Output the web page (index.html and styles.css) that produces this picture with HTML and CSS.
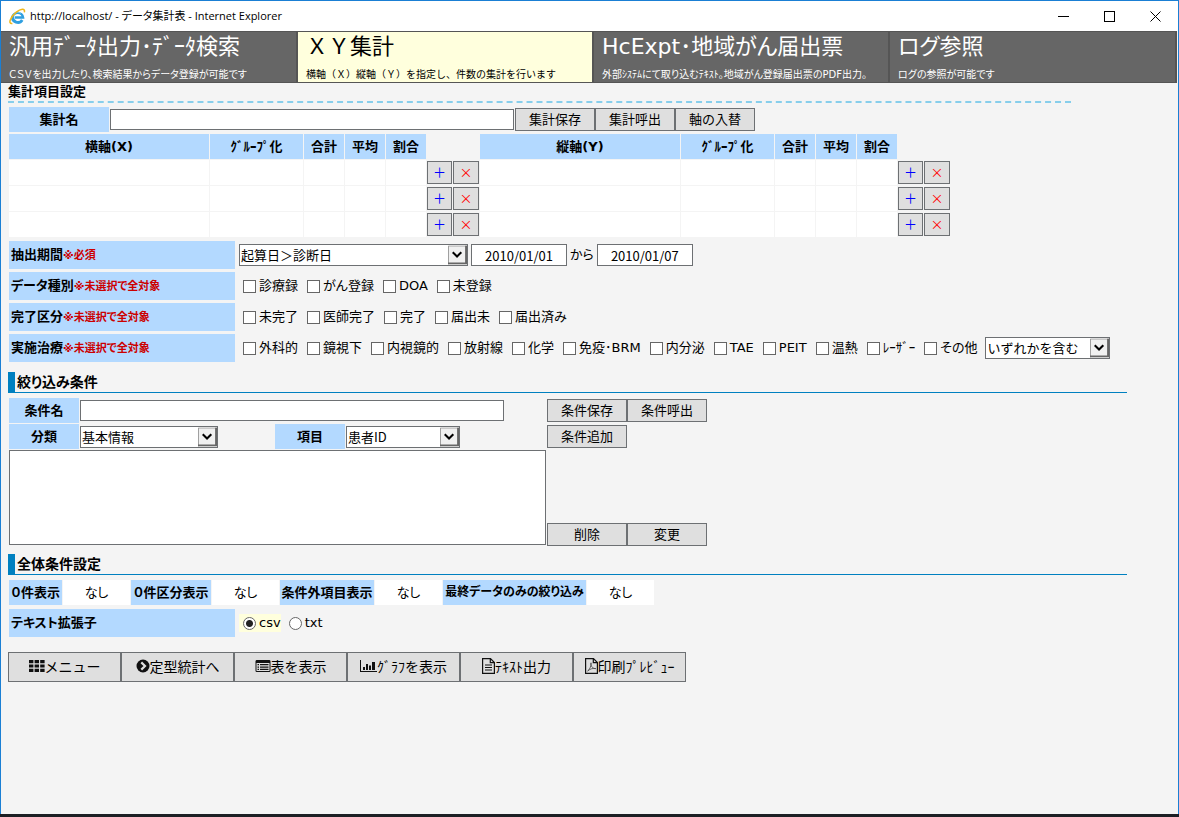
FILE: index.html
```html
<!DOCTYPE html>
<html lang="ja">
<head>
<meta charset="utf-8">
<title>データ集計表</title>
<link rel="stylesheet" href="styles.css">
</head>
<body>
<div class="window">
  <header class="titlebar">
    <svg class="ie" viewBox="0 0 18 18" aria-hidden="true">
      <path d="M3.6 10.1 A5.7 5.7 0 0 1 14.9 10.1 H6" fill="none" stroke="#2f9fe0" stroke-width="2.6"/>
      <path d="M3.7 9 A5.6 5.6 0 0 0 14 12.6" fill="none" stroke="#2f9fe0" stroke-width="3"/>
      <path d="M5 6.2 A5.4 5.4 0 0 1 12.6 5.5" fill="none" stroke="#8fd6f7" stroke-width="1"/>
      <path d="M3.6 16.3 C-1.6 17.3 1.6 9.4 7.4 4.6 C12.2 0.8 17.6 -0.2 16.2 4.6" fill="none" stroke="#f0b81c" stroke-width="1.6"/>
    </svg>
    <span class="caption">http://localhost/ - <span class="kana">データ集計表</span> - Internet Explorer</span>
    <button class="win" type="button" aria-label="最小化"><svg viewBox="0 0 11 11"><path d="M0 5.5H11"/></svg></button>
    <button class="win" type="button" aria-label="最大化"><svg viewBox="0 0 11 11"><path d="M.5 .5H10.5V10.5H.5Z"/></svg></button>
    <button class="win" type="button" aria-label="閉じる"><svg viewBox="0 0 11 11"><path d="M.5 .5L10.5 10.5M10.5 .5L.5 10.5" shape-rendering="auto"/></svg></button>
  </header>
  <nav class="tabs">
    <a href="#export" class="tab"><span class="tab-title">汎用ﾃﾞｰﾀ出力･ﾃﾞｰﾀ検索</span><span class="tab-note">ＣＳＶを出力したり、検索結果からデータ登録が可能です</span></a>
    <a href="#xy" class="tab active"><span class="tab-title">ＸＹ集計</span><span class="tab-note">横軸（Ｘ）縦軸（Ｙ）を指定し、件数の集計を行います</span></a>
    <a href="#hcexpt" class="tab"><span class="tab-title">HcExpt･地域がん届出票</span><span class="tab-note">外部ｼｽﾃﾑにて取り込むﾃｷｽﾄ。地域がん登録届出票のPDF出力。</span></a>
    <a href="#log" class="tab"><span class="tab-title">ログ参照</span><span class="tab-note">ログの参照が可能です</span></a>
  </nav>
  <main>
    <h2 class="dashed">集計項目設定</h2>
    <div class="row">
      <label class="head w100" for="sum-name">集計名</label>
      <input class="text w404" id="sum-name" type="text">
      <div class="group"><button class="btn" type="button">集計保存</button><button class="btn" type="button">集計呼出</button><button class="btn" type="button">軸の入替</button></div>
    </div>
    <table class="axes">
      <thead>
        <tr>
          <th class="c-axis">横軸(X)</th><th class="c-group">ｸﾞﾙｰﾌﾟ化</th><th class="c-calc">合計</th><th class="c-calc">平均</th><th class="c-calc">割合</th><td class="act"></td>
          <th class="c-axis">縦軸(Y)</th><th class="c-group">ｸﾞﾙｰﾌﾟ化</th><th class="c-calc">合計</th><th class="c-calc">平均</th><th class="c-calc">割合</th><td class="act"></td>
        </tr>
      </thead>
      <tbody>
        <tr><td></td><td></td><td></td><td></td><td></td><td class="act"><div class="pair"><button class="mini add" type="button">＋</button><button class="mini del" type="button">×</button></div></td><td></td><td></td><td></td><td></td><td></td><td class="act"><div class="pair"><button class="mini add" type="button">＋</button><button class="mini del" type="button">×</button></div></td></tr>
        <tr><td></td><td></td><td></td><td></td><td></td><td class="act"><div class="pair"><button class="mini add" type="button">＋</button><button class="mini del" type="button">×</button></div></td><td></td><td></td><td></td><td></td><td></td><td class="act"><div class="pair"><button class="mini add" type="button">＋</button><button class="mini del" type="button">×</button></div></td></tr>
        <tr><td></td><td></td><td></td><td></td><td></td><td class="act"><div class="pair"><button class="mini add" type="button">＋</button><button class="mini del" type="button">×</button></div></td><td></td><td></td><td></td><td></td><td></td><td class="act"><div class="pair"><button class="mini add" type="button">＋</button><button class="mini del" type="button">×</button></div></td></tr>
      </tbody>
    </table>
    <div class="filters">
      <div class="field">
        <div class="name">抽出期間<em>※必須</em></div>
        <div class="period">
          <span class="select w229"><select aria-label="抽出期間の基準"><option>起算日＞診断日</option></select><svg viewBox="0 0 20 20"><use href="#chev"/></svg></span>
          <input class="text date" type="text" value="2010/01/01" aria-label="開始日">
          <span>から</span>
          <input class="text date" type="text" value="2010/01/07" aria-label="終了日">
        </div>
      </div>
      <div class="field">
        <div class="name">データ種別<em>※未選択で全対象</em></div>
        <div class="checks">
          <label><input type="checkbox">診療録</label><label><input type="checkbox">がん登録</label><label><input type="checkbox">DOA</label><label><input type="checkbox">未登録</label>
        </div>
      </div>
      <div class="field">
        <div class="name">完了区分<em>※未選択で全対象</em></div>
        <div class="checks">
          <label><input type="checkbox">未完了</label><label><input type="checkbox">医師完了</label><label><input type="checkbox">完了</label><label><input type="checkbox">届出未</label><label><input type="checkbox">届出済み</label>
        </div>
      </div>
      <div class="field">
        <div class="name">実施治療<em>※未選択で全対象</em></div>
        <div class="checks">
          <label><input type="checkbox">外科的</label><label><input type="checkbox">鏡視下</label><label><input type="checkbox">内視鏡的</label><label><input type="checkbox">放射線</label><label><input type="checkbox">化学</label><label><input type="checkbox">免疫･BRM</label><label><input type="checkbox">内分泌</label><label><input type="checkbox">TAE</label><label><input type="checkbox">PEIT</label><label><input type="checkbox">温熱</label><label><input type="checkbox">ﾚｰｻﾞｰ</label><label><input type="checkbox">その他</label>
        </div>
        <span class="select w125"><select aria-label="実施治療の条件"><option>いずれかを含む</option></select><svg viewBox="0 0 20 20"><use href="#chev"/></svg></span>
      </div>
    </div>

    <h2 class="bar">絞り込み条件</h2>
    <div class="narrow">
      <div class="line"><label class="head w70" for="cond-name">条件名</label><input class="text w424" id="cond-name" type="text"></div>
      <div class="group"><button class="btn" type="button">条件保存</button><button class="btn" type="button">条件呼出</button></div>
      <div class="line">
        <label class="head w70" for="category">分類</label>
        <span class="select w138"><select id="category"><option>基本情報</option></select><svg viewBox="0 0 20 20"><use href="#chev"/></svg></span>
        <label class="head w70 apart" for="item">項目</label>
        <span class="select w114"><select id="item"><option>患者ID</option></select><svg viewBox="0 0 20 20"><use href="#chev"/></svg></span>
      </div>
      <div class="group"><button class="btn" type="button">条件追加</button></div>
      <textarea class="list" aria-label="条件一覧"></textarea>
      <div class="group low"><button class="btn" type="button">削除</button><button class="btn" type="button">変更</button></div>
    </div>

    <h2 class="bar">全体条件設定</h2>
    <div class="options">
      <div class="head w53">０件表示</div><div class="value">なし</div>
      <div class="head w80">０件区分表示</div><div class="value">なし</div>
      <div class="head w94">条件外項目表示</div><div class="value">なし</div>
      <div class="head w143 small">最終データのみの絞り込み</div><div class="value">なし</div>
    </div>
    <div class="field">
      <div class="name">テキスト拡張子</div>
      <div class="radios">
        <label class="on"><input type="radio" name="ext" checked>csv</label><label><input type="radio" name="ext">txt</label>
      </div>
    </div>

    <div class="commands">
      <button class="cmd" type="button"><svg viewBox="0 0 16 14"><path d="M0 1h4.4v3.2H0zM5.6 1H10v3.2H5.6zM11.2 1h4.4v3.2h-4.4zM0 5.4h4.4v3.2H0zM5.6 5.4H10v3.2H5.6zM11.2 5.4h4.4v3.2h-4.4zM0 9.8h4.4V13H0zM5.6 9.8H10V13H5.6zM11.2 9.8h4.4V13h-4.4z"/></svg>メニュー</button>
      <button class="cmd" type="button"><svg class="i14" viewBox="0 0 14 14"><circle cx="7" cy="7" r="6.5"/><path d="M5.3 3.4L9 7L5.3 10.6" fill="none" stroke="#dfdfdf" stroke-width="2.2"/></svg>定型統計へ</button>
      <button class="cmd" type="button"><svg viewBox="0 0 16 14"><path d="M1.5 1h13A1.2 1.2 0 0 1 15.500 2.200v9.600a1.200 1.200 0 0 1-1.200 1.200H1.700A1.200 1.200 0 0 1 .5 11.800V2.200A1.200 1.200 0 0 1 1.500 1z"/><path d="M1.500 4h13v8h-13z" fill="#dfdfdf"/><path d="M2.500 5h1.500v1.300H2.500zM5 5h8.500v1.300H5zM2.500 7.400h1.500v1.300H2.500zM5 7.400h8.500v1.300H5zM2.500 9.800h1.500v1.300H2.500zM5 9.800h8.500v1.300H5z"/></svg>表を表示</button>
      <button class="cmd" type="button"><svg class="i17" viewBox="0 0 17 14"><path d="M0 1h1v11h16v1H0zM3 8h2v3H3zM6 5h2v6H6zM9 6.500h2V11H9zM12 3h3v8h-3z"/></svg>ｸﾞﾗﾌを表示</button>
      <button class="cmd" type="button"><svg class="i13" viewBox="0 0 13 16"><path d="M.6 .6H8.500L12.400 4.500V15.400H.6zM8.300 .6V4.700H12.400M3 7h7M3 9.500h7M3 12h7" fill="none" stroke="#111" stroke-width="1.200"/></svg>ﾃｷｽﾄ出力</button>
      <button class="cmd" type="button"><svg class="i13" viewBox="0 0 13 16"><path d="M.6 .6H8.500L12.400 4.500V15.400H.6zM8.300 .6V4.700H12.400" fill="none" stroke="#111" stroke-width="1.200"/><path d="M2.600 13C4.500 12 6.300 8 6 4.800C5.600 8 7.500 10.800 10.800 10.600C8 10 5.500 10.700 2.600 13z" fill="none" stroke="#444" stroke-width=".8"/></svg>印刷ﾌﾟﾚﾋﾞｭｰ</button>
    </div>
  </main>
</div>
<svg class="defs" aria-hidden="true"><symbol id="chev" viewBox="0 0 20 20"><path d="M.5 20V.5H20" fill="none" stroke="#999"/><path d="M19 0V19H0" fill="none" stroke="#666" stroke-width="2"/><path d="M5 7L9.500 11.500L14 7" fill="none" stroke="#000" stroke-width="2.200"/></symbol></svg>
</body>
</html>
```
FILE: styles.css
```css
* { box-sizing: border-box; }

body {
  margin: 0;
  background: #1c1f24;
  color: #000;
  font: 13px/18px "DejaVu Sans", "Noto Sans CJK JP", sans-serif;
}

button, input, select, textarea {
  margin: 0;
  padding: 0;
  border: 1px solid #6d7073;
  border-radius: 0;
  background: #fff;
  color: #000;
  font: 13px/18px "Noto Sans CJK JP", sans-serif;
}

.defs { position: absolute; width: 0; height: 0; }

.window {
  min-height: calc(100vh - 3px);
  margin-bottom: 3px;
  border: 1px solid #1a7fd4;
  border-bottom: 0;
  background: #f4f4f4;
}

.titlebar {
  display: flex;
  align-items: center;
  height: 30px;
  padding-left: 8px;
  background: #fff;
}
.ie { width: 17px; height: 17px; margin-right: 4px; }
.caption { flex: 1; font: 11px/18px "Open Sans", "Noto Sans CJK JP", sans-serif; }
.kana { font-feature-settings: "palt"; }
.win {
  display: grid;
  place-items: center;
  width: 46px;
  height: 29px;
  border: 0;
}
.win svg { width: 11px; height: 11px; fill: none; stroke: #000; shape-rendering: crispEdges; }

.tabs {
  display: grid;
  grid-template-columns: minmax(0, 297fr) minmax(0, 296fr) minmax(0, 296fr) minmax(0, 287fr);
  margin-right: 1px;
  border: 1px solid #555;
  border-width: 1px 0;
}
.tab {
  display: flex;
  flex-direction: column;
  justify-content: space-between;
  height: 50px;
  padding: 0 8px;
  border-right: 2px solid #555;
  background: #666;
  color: #fff;
  text-decoration: none;
  white-space: nowrap;
  font-feature-settings: "palt";
}
.tab.active { background: #ffffdd; color: #000; font-feature-settings: normal; }
.tab-title { font-size: 22px; line-height: 30px; }
.tab-note { font-size: 10px; line-height: 14px; }

main { padding: 0 7px 16px; }

h2 { margin: 0; font-weight: bold; font-feature-settings: "palt"; }
.dashed {
  margin-right: 100px;
  border-bottom: 2px dashed #87ceeb;
  font-size: 13px;
  line-height: 18px;
}
.bar {
  margin: 8px 44px 5px 0;
  padding: 0 0 0 2px;
  border-bottom: 1px solid #0080c0;
  border-left: 7px solid #0080c0;
  font-size: 14px;
  line-height: 20px;
}

.row, .line, .options { display: flex; align-items: center; gap: 1px; }
.row { margin: 4px 0 0 1px; }
.group { display: flex; align-items: center; }
.group.low { align-items: flex-end; }

.head {
  height: 25px;
  background: #b3d9ff;
  font-weight: bold;
  line-height: 25px;
  text-align: center;
  white-space: nowrap;
  font-feature-settings: "palt";
}
.head.small { font-size: 12px; }
.w53 { width: 53px; }
.w70 { width: 70px; }
.w80 { width: 80px; }
.w94 { width: 94px; }
.w100 { width: 100px; }
.w143 { width: 143px; }
.apart { margin-left: 56px; }

.text { height: 21px; padding: 0 2px; }
.w404 { width: 404px; }
.w424 { width: 424px; }
.date { width: 96px; height: 22px; text-align: center; }

.btn { width: 80px; height: 23px; padding-bottom: 2px; background: #dfdfdf; }

.axes { margin-top: 1px; border-spacing: 1px; table-layout: fixed; }
.axes th {
  height: 25px;
  padding: 0;
  background: #b3d9ff;
  font-weight: bold;
  white-space: nowrap;
}
.axes td { height: 25px; padding: 0; background: #fff; }
.axes .act { min-width: 52px; background: none; }
.c-axis { min-width: 200px; }
.c-group { min-width: 93px; }
.c-calc { min-width: 40px; }
.pair { display: flex; gap: 1px; }
.mini { width: 26px; height: 23px; padding-bottom: 2px; background: #dfdfdf; }
.mini.add { width: 25px; color: #00f; }
.mini.del { color: #f00; }

.filters { display: grid; gap: 3px; margin-top: 3px; padding-bottom: 2px; }
.field { display: flex; align-items: center; margin-left: 1px; white-space: nowrap; font-feature-settings: "palt"; }
.name {
  width: 226px;
  height: 28px;
  margin-right: 4px;
  padding-left: 2px;
  background: #b3d9ff;
  font-weight: bold;
  line-height: 28px;
}
.name em { color: #c00; font-size: 11px; font-style: normal; }
.period { display: flex; align-items: center; gap: 3px; }

.checks { display: flex; gap: 9px; margin: 0 8px 0 4px; }
.checks label, .radios label { display: flex; align-items: center; gap: 3px; }
.checks input, .radios input {
  appearance: none;
  width: 13px;
  height: 13px;
  border: 1px solid #666;
}
.checks input:checked { background: #333; }
.radios { display: flex; gap: 4px; }
.radios label { padding-left: 4px; }
.radios .on { background: #ffffdd; }
.radios input { border-radius: 50%; }
.radios input:checked { background: radial-gradient(circle, #222 0 3px, #fff 4px); }

.select { display: inline-grid; grid-template-columns: 1fr 20px; height: 22px; }
.select select {
  grid-area: 1 / 1 / 2 / 3;
  appearance: none;
  padding: 0 22px 0 1px;
  text-overflow: clip;
}
.select svg {
  grid-area: 1 / 2;
  z-index: 1;
  width: 19px;
  height: 20px;
  margin-top: 1px;
  background: #f0f0f0;
  pointer-events: none;
}
.w114 { width: 114px; }
.w125 { width: 125px; }
.w138 { width: 138px; }
.w229 { width: 229px; }

.narrow {
  display: grid;
  grid-template-columns: 537px auto;
  grid-template-rows: 25px 25px 96px;
  gap: 1px;
  margin-left: 1px;
}
.list { width: 100%; height: 95px; resize: none; }

.options { margin: 0 0 4px 1px; }
.value { width: 67px; height: 25px; background: #fff; line-height: 25px; text-align: center; font-feature-settings: "palt"; }

.commands { display: flex; margin-top: 15px; }
.cmd {
  display: flex;
  align-items: center;
  justify-content: center;
  width: 113px;
  height: 30px;
  padding-bottom: 2px;
  background: #dfdfdf;
  font-size: 14px;
  white-space: nowrap;
}
.cmd svg { flex: none; width: 16px; height: 14px; fill: #111; }
.cmd .i13 { width: 13px; height: 16px; }
.cmd .i14 { width: 14px; }
.cmd .i17 { width: 17px; }
```
